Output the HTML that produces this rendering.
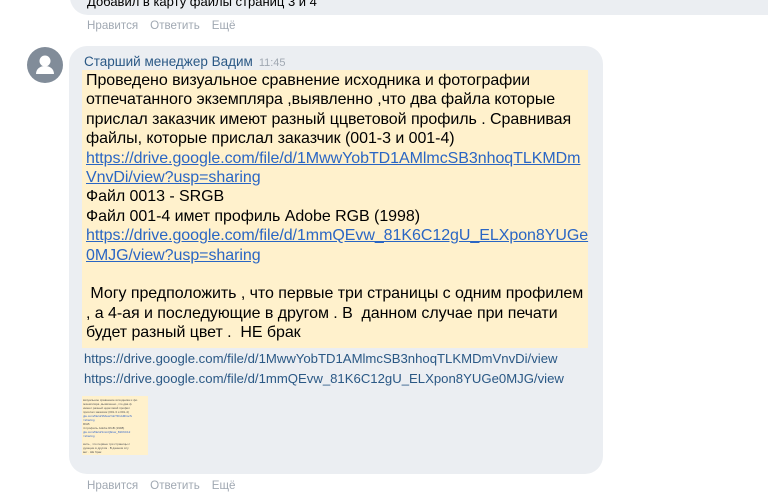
<!DOCTYPE html>
<html><head><meta charset="utf-8"><style>
*{margin:0;padding:0;box-sizing:border-box}
body{width:768px;height:503px;overflow:hidden;background:#fff;font-family:"Liberation Sans",Arial,sans-serif;position:relative}
.b1{position:absolute;left:70px;top:-40px;width:720px;height:55px;background:#ebeef2;border-radius:18px}
.b1 span{position:absolute;left:17px;top:34px;font-size:13px;color:#000}
.act{position:absolute;font-size:11.6px;color:#a0a8b2;white-space:nowrap}
.act span{margin-right:12px}
.av{position:absolute;left:27px;top:47px;width:36px;height:36px;border-radius:50%;background:#818c99;overflow:hidden}
.b2{position:absolute;left:69px;top:46px;width:534px;height:428px;background:#ebeef2;border-radius:18px}
.name{position:absolute;left:84px;top:54px;font-size:13.5px;color:#2a5885;white-space:nowrap}
.name i{font-style:normal;color:#a0a8b2;font-size:11px;margin-left:6px}
.y{position:absolute;left:82px;top:70px;width:506px;height:278px;background:#fff1cc;padding:1px 4px;font-size:16px;line-height:19.4px;color:#000;white-space:nowrap;letter-spacing:-0.05px}
.y a{color:#2a66c4;text-decoration:underline}
.ln{position:absolute;left:84px;font-size:13.15px;color:#2a5885;white-space:nowrap}
.th{position:absolute;left:82px;top:396px;width:66px;height:59px;background:#fff1cc;padding:2px 1px;font-size:3px;line-height:4px;color:#555;overflow:hidden;white-space:nowrap}
</style></head><body>
<div class="b1"><span>Добавил в карту файлы страниц 3 и 4</span></div>
<div class="act" style="left:87px;top:19px"><span>Нравится</span><span>Ответить</span><span>Ещё</span></div>
<div class="av"><svg width="36" height="36" viewBox="0 0 36 36"><circle cx="18" cy="14" r="5.5" fill="#fff"/><path d="M9 27c0-5 4-8 9-8s9 3 9 8z" fill="#fff"/></svg></div>
<div class="b2"></div>
<div class="name">Старший менеджер Вадим<i>11:45</i></div>
<div class="y">Проведено визуальное сравнение исходника и фотографии<br>отпечатанного экземпляра ,выявленно ,что два файла которые<br>прислал заказчик имеют разный ццветовой профиль . Сравнивая<br>файлы, которые прислал заказчик (001-3 и 001-4)<br><a>https://drive.google.com/file/d/1MwwYobTD1AMlmcSB3nhoqTLKMDm<br>VnvDi/view?usp=sharing</a><br>Файл 0013 - SRGB<br>Файл 001-4 имет профиль Adobe RGB (1998)<br><a>https://drive.google.com/file/d/1mmQEvw_81K6C12gU_ELXpon8YUGe<br>0MJG/view?usp=sharing</a><br><br>&nbsp;Могу предположить , что первые три страницы с одним профилем<br>, а 4-ая и последующие в другом . В &nbsp;данном случае при печати<br>будет разный цвет . &nbsp;НЕ брак</div>
<div class="ln" style="top:351px">https://drive.google.com/file/d/1MwwYobTD1AMlmcSB3nhoqTLKMDmVnvDi/view</div>
<div class="ln" style="top:371px">https://drive.google.com/file/d/1mmQEvw_81K6C12gU_ELXpon8YUGe0MJG/view</div>
<div class="th">визуальное сравнение исходника и фо<br>экземпляра ,выявленно ,что два ф<br>имеют разный ццветовой профил<br>прислал заказчик (001-3 и 001-4)<br><span style="color:#36c">gle.com/file/d/1MwwYobTD1AMlmcS</span><br><span style="color:#36c">=sharing</span><br>RGB<br>4 профиль Adobe RGB (1998)<br><span style="color:#36c">gle.com/file/d/1mmQEvw_81K6C12</span><br><span style="color:#36c">=sharing</span><br><br>жить , что первые три страницы с<br>дующие в другом . В данном слу<br>вет . НЕ брак</div>
<div class="act" style="left:87px;top:479px"><span>Нравится</span><span>Ответить</span><span>Ещё</span></div>
</body></html>
